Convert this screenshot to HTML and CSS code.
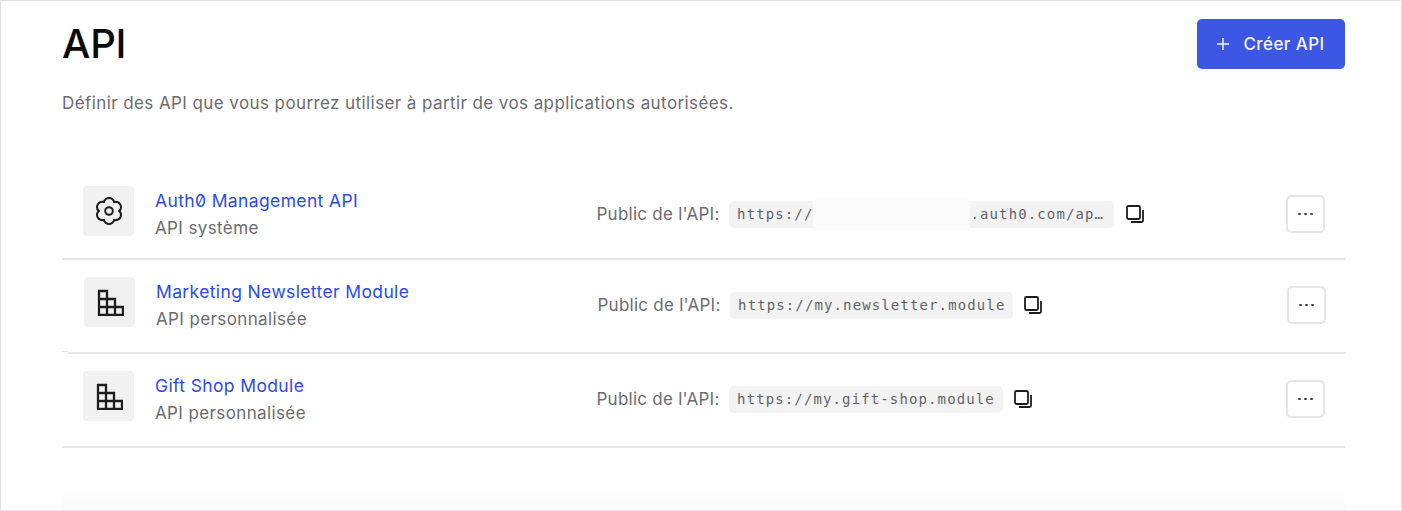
FILE: index.html
```html
<!DOCTYPE html>
<html lang="fr">
<head>
<meta charset="utf-8">
<title>API</title>
<link rel="stylesheet" href="styles.css">
</head>
<body>
<main class="page">
  <header class="head">
    <div class="head-text">
      <h1 class="title">API</h1>
      <p class="intro">Définir des API que vous pourrez utiliser à partir de vos applications autorisées.</p>
    </div>
    <button class="create" type="button">
      <svg class="plus" viewBox="0 0 14 14" width="14" height="14"><path d="M7 1v12M1 7h12"/></svg>
      <span>Créer API</span>
    </button>
  </header>
  <ul class="list">
    <li class="row">
      <span class="tile">
        <svg class="ico gear" viewBox="0 0 28 28" width="28" height="28">
          <path d="M8.7 5.1C9.5 3 11.2 1 14 1S18.5 3 19.3 5.1"/>
          <path d="M8.7 5.1C9.5 3 11.2 1 14 1S18.5 3 19.3 5.1" transform="rotate(60 14 14)"/>
          <path d="M8.7 5.1C9.5 3 11.2 1 14 1S18.5 3 19.3 5.1" transform="rotate(120 14 14)"/>
          <path d="M8.7 5.1C9.5 3 11.2 1 14 1S18.5 3 19.3 5.1" transform="rotate(180 14 14)"/>
          <path d="M8.7 5.1C9.5 3 11.2 1 14 1S18.5 3 19.3 5.1" transform="rotate(240 14 14)"/>
          <path d="M8.7 5.1C9.5 3 11.2 1 14 1S18.5 3 19.3 5.1" transform="rotate(300 14 14)"/>
          <circle cx="14" cy="14" r="3.8"/>
        </svg>
      </span>
      <div class="names">
        <a class="name" href="#">Auth0 Management API</a>
        <span class="kind">API système</span>
      </div>
      <div class="aud">
        <span class="aud-label">Public de l'API:</span>
        <code class="chip chip-long">https://<span class="redact"></span>.auth0.com/ap…</code>
        <svg class="copy" viewBox="0 0 20 20" width="20" height="20"><rect x="2" y="2" width="13" height="13" rx="1.5"/><path d="M18 6v10.5a1.5 1.5 0 0 1-1.5 1.5H6"/></svg>
      </div>
      <button class="more" type="button" aria-label="Plus"><i></i><i></i><i></i></button>
    </li>
    <li class="row">
      <span class="tile">
        <svg class="ico" viewBox="0 0 28 28" width="28" height="28"><path d="M3 3h8v24H3zM11 11h8v16h-8zM19 19h8v8h-8zM3 11h8M3 19h16"/></svg>
      </span>
      <div class="names">
        <a class="name" href="#">Marketing Newsletter Module</a>
        <span class="kind">API personnalisée</span>
      </div>
      <div class="aud">
        <span class="aud-label">Public de l'API:</span>
        <code class="chip">https://my.newsletter.module</code>
        <svg class="copy" viewBox="0 0 20 20" width="20" height="20"><rect x="2" y="2" width="13" height="13" rx="1.5"/><path d="M18 6v10.5a1.5 1.5 0 0 1-1.5 1.5H6"/></svg>
      </div>
      <button class="more" type="button" aria-label="Plus"><i></i><i></i><i></i></button>
    </li>
    <li class="row">
      <span class="tile">
        <svg class="ico" viewBox="0 0 28 28" width="28" height="28"><path d="M3 3h8v24H3zM11 11h8v16h-8zM19 19h8v8h-8zM3 11h8M3 19h16"/></svg>
      </span>
      <div class="names">
        <a class="name" href="#">Gift Shop Module</a>
        <span class="kind">API personnalisée</span>
      </div>
      <div class="aud">
        <span class="aud-label">Public de l'API:</span>
        <code class="chip">https://my.gift-shop.module</code>
        <svg class="copy" viewBox="0 0 20 20" width="20" height="20"><rect x="2" y="2" width="13" height="13" rx="1.5"/><path d="M18 6v10.5a1.5 1.5 0 0 1-1.5 1.5H6"/></svg>
      </div>
      <button class="more" type="button" aria-label="Plus"><i></i><i></i><i></i></button>
    </li>
  </ul>
  <div class="fade"></div>
</main>
</body>
</html>
```
FILE: styles.css
```css
* { box-sizing: border-box; }
html, body { margin: 0; height: 100%; }
body { background: #fff; font-family: Inter, "Liberation Sans", sans-serif; overflow: hidden; }
.page {
  height: 511px;
  border: 1px solid #e2e2e2;
  border-bottom-color: #e6e6e6;
  padding: 18px 56px 0 61px;
  display: flex;
  flex-direction: column;
}
.head { display: flex; justify-content: space-between; align-items: flex-start; }
.title { margin: 0; font-size: 40px; line-height: 50px; font-weight: 500; color: #0a0a0a; letter-spacing: -.2px; }
.intro { margin: 22px 0 0; font-size: 17px; line-height: 24px; letter-spacing: .41px; color: #6b6c70; }
.create {
  width: 148px; height: 50px; border: 0; border-radius: 5px; padding: 0 2px 0 0;
  background: #3c57e4; color: #f4f5fe;
  font: 500 17px Inter, sans-serif; letter-spacing: .4px;
  display: flex; align-items: center; justify-content: center; gap: 14px;
}
.plus { fill: none; stroke: currentColor; stroke-width: 1.5; }
.list { list-style: none; margin: 51px 0 0; padding: 0; }
.row {
  display: flex; align-items: flex-start;
  height: 94px;
  padding: 20px 20px 0 21px;
  border-bottom: 2px solid #e6e6e6;
}
.row:nth-child(2) { position: relative; margin: 0 -1px 0 1px; padding-top: 17px; }
.row:nth-child(2)::before { content: ""; position: absolute; left: 0; bottom: -2px; width: 5px; height: 2px; background: #fff; }
.row:nth-child(2)::after { content: ""; position: absolute; left: -1px; bottom: 0; width: 6px; height: 1px; background: #e6e6e6; }
.row:nth-child(3) { padding-top: 17px; }
.tile {
  width: 51px; height: 50px; flex: none; border-radius: 4px; background: #f1f1f1;
  display: flex; align-items: center; justify-content: center;
}
.ico { fill: none; stroke: #1d1d1f; stroke-width: 2.3; }
.gear { stroke-width: 2; stroke-linecap: round; }
.names { width: 462.5px; padding: 1px 0 0 21px; display: flex; flex-direction: column; }
.name { font-size: 17.5px; line-height: 27px; letter-spacing: .37px; color: #2a4ce6; text-decoration: none; font-feature-settings: "zero"; }
.kind { margin-top: 1px; font-size: 17px; line-height: 27px; letter-spacing: .38px; color: #6b6c70; }
.aud { flex: 1; display: flex; align-items: center; height: 56px; }
.aud-label { font-size: 17px; letter-spacing: .25px; color: #6b6c70; margin-right: 9.5px; }
.chip {
  display: flex; align-items: center; height: 27px; padding: 0 8px;
  border-radius: 5px; background: #f3f3f3; color: #626368;
  font: 14px "DejaVu Sans Mono", monospace; letter-spacing: 1.12px; white-space: nowrap;
}
.chip-long { padding-right: 10px; }
.redact { width: 157px; height: 31px; flex: none; background: #fbfbfb; }
.copy { margin-left: 10px; fill: none; stroke: #1d1d1f; stroke-width: 1.8; }
.chip-long + .copy { margin-left: 11px; }
.more {
  width: 39px; height: 38px; flex: none; margin-top: 9px; padding: 0;
  background: #fff; border: 2px solid #e6e6e6; border-radius: 5px;
  display: flex; align-items: center; justify-content: center; gap: 3.5px;
}
.more i { width: 2.5px; height: 2.5px; border-radius: 50%; background: #444; }
.fade { height: 26px; margin-top: 38px; background: linear-gradient(#fff, #fafafa); }
```
